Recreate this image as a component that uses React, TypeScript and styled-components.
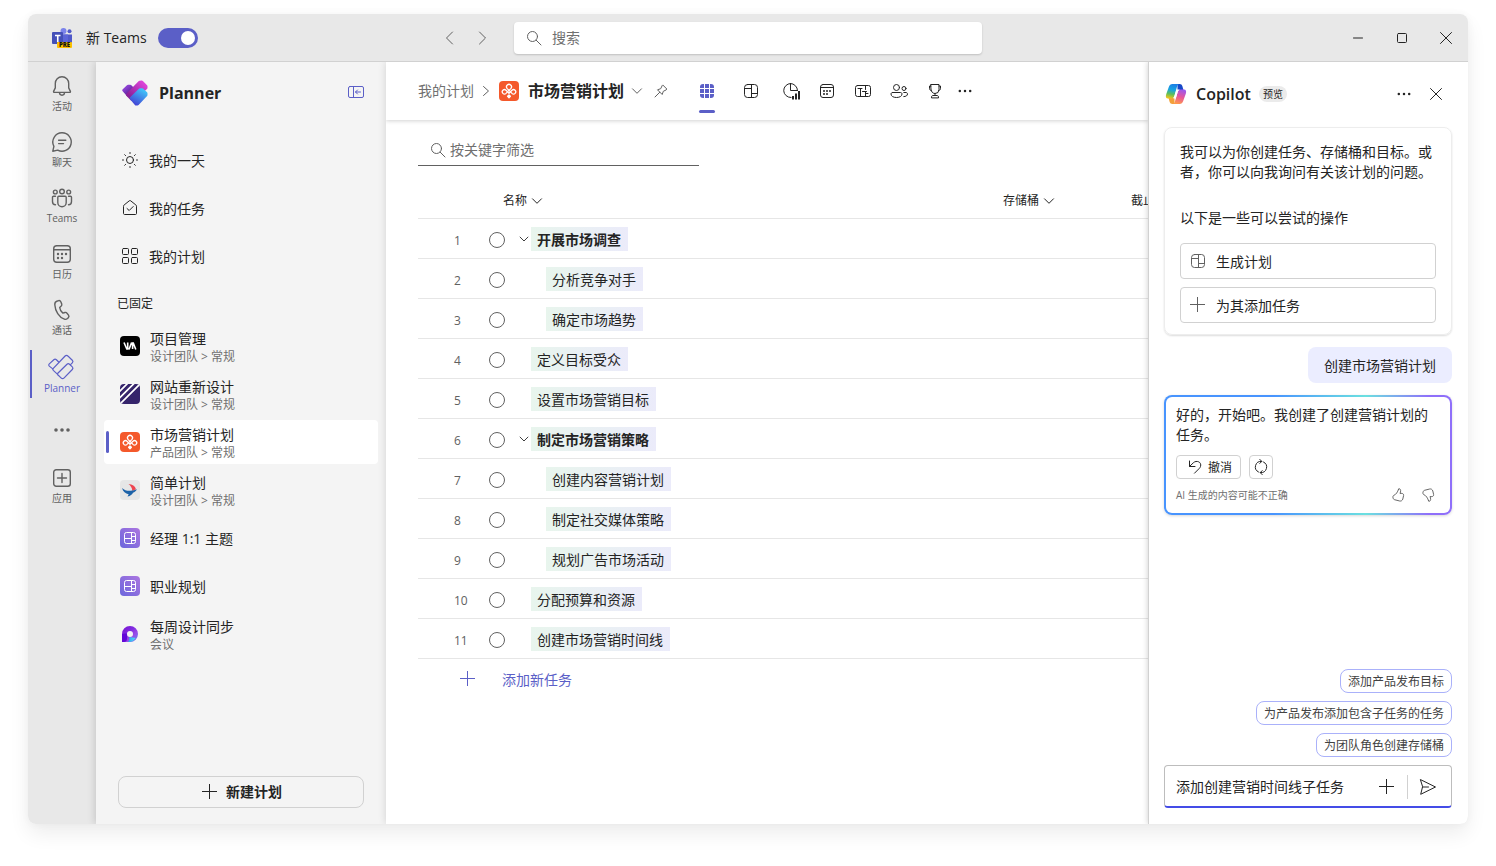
import React from 'react';
import styled, { createGlobalStyle, css } from 'styled-components';

const accent = '#5b5fc7';
const ink = '#242424';
const soft = '#616161';
const line = '#d1d1d1';
const hair = '#e6e6e6';

const GlobalStyle = createGlobalStyle`
  * { box-sizing: border-box; }
  body {
    margin: 0;
    background: #ffffff;
    color: ${ink};
    font-family: 'Open Sans', 'Noto Sans CJK SC', sans-serif;
    font-size: 14px;
    line-height: 20px;
  }
  button, input {
    font: inherit;
    color: inherit;
  }
  h1, h2, p, ul { margin: 0; padding: 0; }
  ul { list-style: none; }
`;

/* ---------- Shell ---------- */

const Page = styled.div`
  display: flex;
  min-height: 100vh;
  padding: 14px 28px 42px;
`;

const Window = styled.div`
  flex: 1;
  min-width: 0;
  display: flex;
  flex-direction: column;
  border-radius: 8px;
  box-shadow: 0 10px 20px rgba(0, 0, 0, 0.07), 0 0 8px rgba(0, 0, 0, 0.04);
  overflow: hidden;
`;

const TitleBar = styled.header`
  display: grid;
  grid-template-columns: 1fr 468px 1fr;
  align-items: center;
  height: 48px;
  background: #e8e8e8;
  border-bottom: 1px solid ${line};
`;

const Body = styled.div`
  flex: 1;
  display: grid;
  grid-template-columns: 68px 290px minmax(0, 1fr) 320px;
  overflow: hidden;
`;

const IconButton = styled.button<{ $color?: string }>`
  display: inline-flex;
  align-items: center;
  justify-content: center;
  flex: none;
  width: 24px;
  height: 24px;
  padding: 0;
  border: 0;
  background: none;
  color: ${(p) => p.$color ?? ink};
  cursor: pointer;
`;

const Label = styled.span`
  padding-top: 2px;
`;

/* ---------- Title bar ---------- */

const Brand = styled.div`
  display: flex;
  align-items: center;
  padding-left: 23px;
`;

const SwitchLabel = styled.label`
  display: flex;
  align-items: center;
  flex: 1;
  gap: 11px;
  margin-left: 13px;
`;

const Switch = styled.input`
  appearance: none;
  position: relative;
  width: 40px;
  height: 20px;
  margin: 0;
  border-radius: 10px;
  background: #bdbdbd;
  &:checked { background: ${accent}; }
  &::before {
    content: '';
    position: absolute;
    top: 3px;
    left: 3px;
    width: 14px;
    height: 14px;
    border-radius: 50%;
    background: #fff;
  }
  &:checked::before { left: 23px; }
`;

const HistoryNav = styled.nav`
  display: flex;
  gap: 9px;
  margin-right: 20px;
`;

const SearchBox = styled.label`
  display: flex;
  align-items: center;
  gap: 8px;
  height: 32px;
  padding: 0 10px;
  border-radius: 4px;
  background: #fff;
  color: ${soft};
  box-shadow: 0 1px 2px rgba(0, 0, 0, 0.18);
`;

const BareInput = styled.input`
  flex: 1;
  min-width: 0;
  padding: 0;
  border: 0;
  outline: 0;
  background: none;
  line-height: 20px;
  &::placeholder { color: #707070; opacity: 1; }
`;

const WindowControls = styled.div`
  display: flex;
  justify-content: flex-end;
  gap: 20px;
  padding-right: 10px;
`;

/* ---------- App rail ---------- */

const Rail = styled.nav`
  background: #e8e8e8;
`;

const RailList = styled.ul`
  display: flex;
  flex-direction: column;
`;

const RailLink = styled.a<{ $active?: boolean }>`
  position: relative;
  display: flex;
  flex-direction: column;
  align-items: center;
  height: 56px;
  padding-top: 12px;
  color: ${(p) => (p.$active ? accent : soft)};
  font-size: 10px;
  line-height: 16px;
  text-decoration: none;
  ${(p) =>
    p.$active &&
    css`
      &::before {
        content: '';
        position: absolute;
        left: 2px;
        top: 8px;
        width: 2px;
        height: 48px;
        background: ${accent};
      }
    `}
`;

/* ---------- Planner sidebar ---------- */

const Sidebar = styled.aside`
  position: relative;
  z-index: 1;
  display: flex;
  flex-direction: column;
  background: #f4f4f4;
  box-shadow: -1px 0 8px rgba(0, 0, 0, 0.16);
`;

const SideHead = styled.div`
  display: flex;
  align-items: center;
  height: 62px;
  padding: 0 18px 0 26px;
`;

const AppName = styled.h1`
  flex: 1;
  margin-left: 11px;
  font-size: 16px;
  font-weight: 700;
  line-height: 24px;
`;

const NavList = styled.ul`
  margin-top: 12px;
`;

const NavLink = styled.a`
  display: flex;
  align-items: center;
  gap: 9px;
  height: 48px;
  padding: 0 24px;
  color: ${ink};
  text-decoration: none;
`;

const GroupTitle = styled.h2`
  margin: 14px 21px 10px;
  font-size: 12px;
  font-weight: 400;
  line-height: 20px;
`;

const PinLink = styled.a<{ $active?: boolean }>`
  position: relative;
  display: flex;
  align-items: center;
  gap: 10px;
  height: 44px;
  margin: 0 8px 4px;
  padding: 0 16px;
  border-radius: 4px;
  background: ${(p) => (p.$active ? '#fff' : 'transparent')};
  color: ${ink};
  text-decoration: none;
  ${(p) =>
    p.$active &&
    css`
      &::before {
        content: '';
        position: absolute;
        left: 2px;
        top: 11px;
        width: 3px;
        height: 22px;
        border-radius: 2px;
        background: ${accent};
      }
    `}
`;

const PinText = styled.span`
  display: flex;
  flex-direction: column;
  padding-top: 2px;
`;

const PinPath = styled.span`
  color: #707070;
  font-size: 12px;
  line-height: 16px;
`;

const NewPlan = styled.button`
  display: flex;
  align-items: center;
  justify-content: center;
  gap: 6px;
  height: 32px;
  margin: auto 22px 16px;
  border: 1px solid ${line};
  border-radius: 8px;
  background: none;
  font-weight: 700;
`;

/* ---------- Plan grid ---------- */

const Main = styled.main`
  position: relative;
  z-index: 2;
  background: #fff;
  box-shadow: 0 0 8px rgba(0, 0, 0, 0.14);
  overflow: hidden;
`;

const MainClip = styled.div`
  overflow: hidden;
  padding-left: 32px;
`;

const PlanBar = styled.div`
  display: flex;
  align-items: center;
  height: 58px;
  padding-left: 32px;
  box-shadow: 0 1px 4px rgba(0, 0, 0, 0.18);
`;

const Crumb = styled.a`
  color: #707070;
  text-decoration: none;
`;

const CrumbSeparator = styled.span`
  display: flex;
  color: ${soft};
`;

const PlanName = styled.h2`
  margin: 0 1px 0 9px;
  font-size: 16px;
  font-weight: 700;
  line-height: 24px;
  white-space: nowrap;
`;

const CrumbLogo = styled.span`
  display: flex;
  margin-left: 1px;
`;

const Tabs = styled.div`
  display: flex;
  align-items: center;
  height: 58px;
  margin-left: 12px;
`;

const Tab = styled.button<{ $wide?: boolean; $active?: boolean; $narrow?: boolean }>`
  position: relative;
  display: flex;
  align-items: center;
  justify-content: center;
  width: ${(p) => (p.$wide ? 44 : p.$narrow ? 24 : 36)}px;
  height: 58px;
  padding: 0;
  border: 0;
  background: none;
  color: ${(p) => (p.$active ? accent : ink)};
  ${(p) =>
    p.$active &&
    css`
      &::after {
        content: '';
        position: absolute;
        left: 14px;
        bottom: 7px;
        width: 16px;
        height: 3px;
        border-radius: 2px;
        background: ${accent};
      }
    `}
`;

const Filter = styled.label`
  display: flex;
  align-items: center;
  gap: 2px;
  width: 281px;
  height: 32px;
  margin-top: 14px;
  padding-left: 10px;
  border-bottom: 1px solid ${soft};
  color: ${soft};
`;

const TaskTable = styled.table`
  width: calc(100% + 111px);
  margin-top: 16px;
  border-collapse: separate;
  border-spacing: 0;
  table-layout: fixed;
`;

const Th = styled.th<{ $lead?: boolean }>`
  height: 37px;
  padding: 2px 0 0 ${(p) => (p.$lead ? 14 : 0)}px;
  border-bottom: 1px solid ${hair};
  font-size: 12px;
  font-weight: 400;
  text-align: left;
  white-space: nowrap;
`;

const ThInner = styled.span`
  display: flex;
  align-items: center;
  gap: 2px;
`;

const Td = styled.td`
  height: 40px;
  padding: 1px 0 0;
  border-bottom: 1px solid ${hair};
`;

const RowNumber = styled(Td)`
  padding: 4px 0 0 36px;
  color: ${soft};
  font-size: 12px;
`;

const Done = styled.input`
  appearance: none;
  display: block;
  width: 16px;
  height: 16px;
  margin: 2px 0 0;
  border: 1px solid ${soft};
  border-radius: 50%;
  &:checked { background: ${accent}; }
`;

const TaskCell = styled.div<{ $child?: boolean }>`
  display: flex;
  align-items: center;
  padding-left: ${(p) => (p.$child ? 29 : 0)}px;
`;

const Toggle = styled.span`
  display: flex;
  width: 14px;
`;

const TaskName = styled.span<{ $strong?: boolean }>`
  height: 24px;
  padding: 0 7px 0 6px;
  background: linear-gradient(90deg, #e8f5ed, #ebebfa);
  font-weight: ${(p) => (p.$strong ? 700 : 400)};
  line-height: 26px;
  white-space: nowrap;
`;

const AddTask = styled.button`
  display: flex;
  align-items: center;
  gap: 24px;
  height: 40px;
  margin-left: 40px;
  padding: 0;
  border: 0;
  background: none;
  color: ${accent};
`;

/* ---------- Copilot panel ---------- */

const Panel = styled.aside`
  position: relative;
  z-index: 3;
  display: flex;
  flex-direction: column;
  padding: 0 16px 16px 15px;
  border-left: 1px solid ${line};
  background: #fff;
  box-shadow: 0 0 6px rgba(0, 0, 0, 0.2);
`;

const PanelHead = styled.div`
  display: flex;
  align-items: center;
  height: 65px;
  padding: 0 4px 1px 0;
`;

const PanelTitle = styled.h2`
  margin: 0 8px;
  font-size: 16px;
  font-weight: 600;
  line-height: 24px;
`;

const Badge = styled.span`
  padding: 0 4px;
  border-radius: 8px;
  background: #ebebeb;
  font-size: 10px;
  line-height: 16px;
`;

const HeadActions = styled.div`
  display: flex;
  gap: 8px;
  margin-left: auto;
`;

const Intro = styled.section`
  padding: 14px 15px 11px;
  border: 1px solid #ededed;
  border-radius: 8px;
  box-shadow: 0 1px 2px rgba(0, 0, 0, 0.14);
`;

const Hint = styled.p`
  margin: 26px 0 15px;
`;

const Suggestion = styled.button`
  display: flex;
  align-items: center;
  gap: 8px;
  width: 100%;
  height: 36px;
  padding: 0 7px;
  border: 1px solid ${line};
  border-radius: 4px;
  background: #fff;
  & > svg { color: ${soft}; }
  & + & { margin-top: 8px; }
`;

const UserBubble = styled.p`
  align-self: flex-end;
  margin: 12px 0;
  padding: 9px 16px 7px;
  border-radius: 8px;
  background: #ebedff;
`;

const Reply = styled.section`
  padding: 8px 10px 6px;
  border: 2px solid transparent;
  border-radius: 8px;
  background:
    linear-gradient(#fff, #fff) padding-box,
    linear-gradient(90deg, #4894fe 0%, #4894fe 38%, #6be0e0 70%, #8f6ffa 92%) border-box;
  box-shadow: 0 1px 3px rgba(0, 0, 0, 0.16);
`;

const ReplyActions = styled.div`
  display: flex;
  gap: 8px;
  margin: 10px 0 4px;
`;

const SmallButton = styled.button<{ $square?: boolean }>`
  display: flex;
  align-items: center;
  justify-content: center;
  gap: 3px;
  width: ${(p) => (p.$square ? 24 : 65)}px;
  height: 24px;
  padding: 0;
  border: 1px solid ${line};
  border-radius: 4px;
  background: #fff;
  font-size: 12px;
  line-height: 16px;
`;

const ReplyFoot = styled.div`
  display: flex;
  align-items: center;
  height: 24px;
  color: #707070;
  font-size: 10px;
  line-height: 16px;
`;

const Votes = styled.div`
  display: flex;
  gap: 6px;
  margin-left: auto;
`;

const Chips = styled.div`
  display: flex;
  flex-direction: column;
  align-items: flex-end;
  gap: 8px;
  margin: auto 0 8px;
`;

const Chip = styled.button`
  height: 24px;
  padding: 2px 7px 0;
  border: 1px solid #aab1fa;
  border-radius: 8px;
  background: #fff;
  color: #424242;
  font-size: 12px;
  line-height: 20px;
`;

const Composer = styled.form`
  display: flex;
  align-items: center;
  height: 43px;
  padding: 2px 11px 0;
  border: 1px solid #bdbdbd;
  border-bottom: 2px solid #444ce7;
  border-radius: 4px;
`;

const Divider = styled.span`
  width: 1px;
  height: 24px;
  margin: 0 8px;
  background: ${line};
`;

/* ---------- Drawings ---------- */

type GlyphProps = { size?: number; box?: number; sw?: number; children: React.ReactNode };

const Glyph = ({ size = 20, box = 20, sw = 1, children }: GlyphProps) => (
  <svg
    width={size}
    height={size}
    viewBox={`0 0 ${box} ${box}`}
    fill="none"
    stroke="currentColor"
    strokeWidth={sw}
    strokeLinecap="round"
    strokeLinejoin="round"
    aria-hidden="true"
  >
    {children}
  </svg>
);

const ChevronDown = () => <Glyph size={16} box={16}><path d="M3.500 5.800 8 10.300 12.500 5.800" /></Glyph>;
const ChevronLeft = () => <Glyph><path d="M13.500 4 7.500 10 13.500 16" /></Glyph>;
const ChevronRight = () => <Glyph><path d="M7.500 4 13.500 10 7.500 16" /></Glyph>;
const CrumbArrow = () => <Glyph size={24} box={24}><path d="M9.500 7.500 14.500 12 9.500 16.500" /></Glyph>;
const SearchIcon = () => <Glyph><circle cx="8.500" cy="8.500" r="5" /><path d="M12.200 12.200 17 17" /></Glyph>;
const PlusIcon = () => <Glyph><path d="M9.500 2v15M2 9.500h15" strokeLinecap="butt" /></Glyph>;
const CloseIcon = () => <Glyph><path d="M4.500 4.500l11 11M15.500 4.500l-11 11" /></Glyph>;
const Dots = () => (
  <Glyph>
    <g fill="currentColor" stroke="none">
      <circle cx="4.800" cy="10" r="1.250" /><circle cx="10" cy="10" r="1.250" /><circle cx="15.200" cy="10" r="1.250" />
    </g>
  </Glyph>
);
const BoardIcon = () => (
  <Glyph><rect x="3.500" y="3.500" width="13" height="13" rx="3" /><path d="M10.500 3.500v13M3.500 7.500h7M10.500 12.500h6" /></Glyph>
);
const GridIcon = () => (
  <Glyph>
    <rect x="3" y="3" width="14" height="14" rx="3" fill="currentColor" stroke="none" />
    <path d="M7.500 2.500v15M12.500 2.500v15M2.500 7.500h15M2.500 12.500h15" stroke="#fff" />
  </Glyph>
);
const ChartIcon = () => (
  <Glyph>
    <path d="M9.500 2.500a7 7 0 1 0 .5 14M9.500 2.500a7 7 0 0 1 7 7M9.500 2.500v7h7" />
    <path d="M12 15v3.500M15 12.500v6M18 10v8.500" strokeWidth="2" strokeLinecap="butt" />
  </Glyph>
);
const CalendarIcon = () => (
  <Glyph>
    <rect x="3.500" y="3.500" width="13" height="13" rx="2.500" />
    <path d="M3.500 6.500h13" />
    <g fill="currentColor" stroke="none">
      <circle cx="7" cy="10" r="1" /><circle cx="10" cy="10" r="1" /><circle cx="13" cy="10" r="1" />
      <circle cx="7" cy="13" r="1" /><circle cx="10" cy="13" r="1" />
    </g>
  </Glyph>
);
const TimelineIcon = () => (
  <Glyph>
    <rect x="2.500" y="4.500" width="15" height="11" rx="2" />
    <path d="M7.500 8v7.500M12.500 4.500v4M5 7.500h4M9.500 10.500h4M12.500 10.500v5M12.500 12.500h2.500" />
  </Glyph>
);
const PeopleIcon = () => (
  <Glyph>
    <circle cx="7.500" cy="6.500" r="3" /><circle cx="15" cy="7.500" r="2" />
    <path d="M3.500 11.500h8c.8 0 1.500.6 1.500 1.500 0 2.200-2.300 3.500-5.500 3.500S2 15.200 2 13c0-.9.700-1.500 1.500-1.500zM14.800 11.500h2.200c.8 0 1.500.6 1.500 1.400 0 1.700-1.500 2.700-3.700 2.700" />
  </Glyph>
);
const TrophyIcon = () => (
  <Glyph>
    <path d="M6 3.500h8v5a4 4 0 0 1-8 0zM6 5H4.500v2.500c0 1.200.8 2 1.800 2M14 5h1.500v2.500c0 1.200-.8 2-1.800 2M10 12.500v2M6.500 16.500v-.5c0-.8.600-1.500 1.500-1.500h4c.9 0 1.500.7 1.500 1.500v.5z" />
  </Glyph>
);
const PinIcon = () => (
  <Glyph size={16} box={16}>
    <path d="M10 2.200 13.800 6 13.200 6.900 10.300 8.300 9.200 11.500 4.500 6.800 7.700 5.700 9.100 2.800zM6.800 9.200 2 14" />
  </Glyph>
);
const SunIcon = () => (
  <Glyph>
    <circle cx="10" cy="10" r="3.500" />
    <path d="M10 2.500v1M10 16.500v1M2.500 10h1M16.500 10h1M4.700 4.700l.9.9M14.400 14.400l.9.9M15.300 4.700l-.9.9M5.600 14.400l-.9.9" />
  </Glyph>
);
const HomeCheckIcon = () => (
  <Glyph>
    <path d="M3.500 8.200c0-.5.200-.9.600-1.200l5.200-4.200a1.100 1.100 0 0 1 1.400 0L15.900 7c.4.300.6.700.6 1.200v7.300c0 .6-.4 1-1 1h-11c-.6 0-1-.4-1-1zM7 10.500l2.200 2 4-4" />
  </Glyph>
);
const TilesIcon = () => (
  <Glyph>
    <rect x="2.500" y="2.500" width="6" height="6" rx="1" /><rect x="11.500" y="2.500" width="6" height="6" rx="1" />
    <rect x="2.500" y="11.500" width="6" height="6" rx="1" /><rect x="11.500" y="11.500" width="6" height="6" rx="1" />
  </Glyph>
);
const CollapseIcon = () => (
  <Glyph>
    <rect x="2.500" y="3.500" width="15" height="11" rx="1.500" />
    <path d="M7.500 3.500v11M14.500 9h-5M11.500 7l-2 2 2 2" />
  </Glyph>
);
const UndoIcon = () => (
  <Glyph><path d="M4.500 4v5.500H10M4.500 9.500l3.800-3.700c3.200-3 8.700-.8 7.200 3.700-.3.900-.8 1.500-1.400 2.100L9.500 16.200" /></Glyph>
);
const SyncIcon = () => (
  <Glyph>
    <path d="M7.500 15A5.600 5.600 0 0 1 10.500 4.400M8.800 2.400l2 2-2 2M12.500 5A5.600 5.600 0 0 1 9.500 15.600M11.200 13.600l-2 2 2 2" />
  </Glyph>
);
const ThumbUpIcon = () => (
  <Glyph size={16} box={20} sw={1.2}>
    <path d="M10.800 2.600c.3-.8 2.400-.4 2.500 1.700.1 1.200-.3 2.600-.8 3.700h2.300c1.500 0 2.500 1.300 2.200 2.700l-1 4.300c-.4 1.800-2.100 2.900-3.900 2.500l-6.300-1.600c-.9-.2-1.600-.9-1.800-1.700l-.4-1.500c-.2-.9.200-1.700 1-2.100 3.400-1.600 4.600-3.900 6.200-8z" />
  </Glyph>
);
const ThumbDownIcon = () => (
  <Glyph size={16} box={20} sw={1.2}>
    <path d="M10.800 17.400c.3.800 2.400.4 2.500-1.700.1-1.200-.3-2.600-.8-3.700h2.300c1.500 0 2.500-1.300 2.200-2.700l-1-4.300c-.4-1.800-2.100-2.900-3.900-2.500L5.800 4.100c-.9.200-1.600.9-1.800 1.700l-.4 1.500c-.2.900.2 1.700 1 2.100 3.400 1.600 4.600 3.900 6.200 8z" />
  </Glyph>
);
const SendIcon = () => (
  <Glyph><path d="M2.700 2.700 17.500 10 2.700 17.300 4.500 10zM4.500 10h6" /></Glyph>
);

const BellIcon = () => (
  <Glyph size={24} box={24} sw={1.4}>
    <path d="M12 2.700c-3.900 0-6.700 3-6.700 6.700v4.500l-1.700 3.500c-.2.600.1 1 .7 1h15.400c.6 0 .9-.4.7-1l-1.700-3.500V9.400c0-3.700-2.800-6.700-6.700-6.700zM9.500 18.600c0 1.600 1.200 2.600 2.500 2.600s2.500-1 2.500-2.600" />
  </Glyph>
);
const ChatIcon = () => (
  <Glyph size={24} box={24} sw={1.4}>
    <path d="M12 2.800a9.200 9.200 0 1 1-4.300 17.300L2.800 21.200l1.100-4.900A9.200 9.200 0 0 1 12 2.800zM8.600 10.300h7.200M8.600 13.600h4.900" />
  </Glyph>
);
const TeamsPeopleIcon = () => (
  <Glyph size={24} box={24} sw={1.4}>
    <circle cx="12" cy="5.500" r="2.300" /><circle cx="5.300" cy="6" r="1.900" /><circle cx="18.700" cy="6" r="1.900" />
    <path d="M7.800 11.300c0-.6.400-1 1-1h6.400c.6 0 1 .4 1 1v5.200a4.200 4.200 0 0 1-8.400 0zM5.500 10.300H3.500c-.6 0-1 .4-1 1v4.200c0 1.900 1.200 3.200 3 3.200M18.500 10.300h2c.6 0 1 .4 1 1v4.200c0 1.900-1.200 3.200-3 3.200" />
  </Glyph>
);
const RailCalendarIcon = () => (
  <Glyph size={24} box={24} sw={1.4}>
    <rect x="3.700" y="3.700" width="16.600" height="16.600" rx="3" /><path d="M3.700 7.800h16.600" />
    <g fill="currentColor" stroke="none">
      <circle cx="8" cy="12" r="1.200" /><circle cx="12" cy="12" r="1.200" /><circle cx="16" cy="12" r="1.200" />
      <circle cx="8" cy="16" r="1.200" /><circle cx="12" cy="16" r="1.200" />
    </g>
  </Glyph>
);
const PhoneIcon = () => (
  <Glyph size={24} box={24} sw={1.4}>
    <path d="M7.300 3l1.100-.3c1-.3 2 .2 2.400 1.100l.9 2.100c.3.800.1 1.600-.5 2.200L9.700 9.500c.2 2.200 1.500 4.300 3.200 5.600l2-.6c.8-.2 1.600 0 2.100.7l1.500 1.900c.6.800.5 1.900-.2 2.600l-.8.800c-.9.800-2 1.100-3.100.7C9 19.400 5.200 13 4.800 6.700 4.700 5 5.600 3.500 7.300 3z" />
  </Glyph>
);
const AppsIcon = () => (
  <Glyph size={24} box={24} sw={1.4}>
    <rect x="3.700" y="3.700" width="16.600" height="16.600" rx="2.500" /><path d="M12 7.500v9M7.500 12h9" />
  </Glyph>
);
const RailDots = () => (
  <Glyph size={40} box={40}>
    <g fill="currentColor" stroke="none"><circle cx="14" cy="20" r="1.800" /><circle cx="20" cy="20" r="1.800" /><circle cx="26" cy="20" r="1.800" /></g>
  </Glyph>
);
const PlannerOutline = () => (
  <svg width="28" height="26" viewBox="0 0 28 26" fill="#e8e8e8" stroke="currentColor" strokeWidth="1.200" strokeLinejoin="round" aria-hidden="true">
    <path d="M1.300 9.900 5.800 5.800c.8-.7 1.800-.7 2.600 0l3.600 3.500-6.300 6.300-4.400-3.500c-.7-.7-.7-1.500 0-2.200z" />
    <path d="M5.300 14.400 17.100 2c.8-.8 2-.8 2.800 0l4.400 4.200c.8.800.8 1.800 0 2.600L12.500 20.600c-.8.800-1.800.8-2.600 0l-4.600-4.200c-.6-.6-.6-1.400 0-2z" />
    <path d="m9.800 19.200 9.200-9c.8-.7 1.700-.7 2.500 0l2.800 2.700c.8.800.8 1.800 0 2.600l-8.400 8.600c-.8.800-1.800.8-2.600 0l-3.500-3.400c-.4-.5-.4-1 0-1.500z" />
  </svg>
);

const PlannerLogo = () => (
  <svg width="26" height="26" viewBox="0 0 26 26" strokeWidth="3" strokeLinejoin="round" aria-hidden="true">
    <defs>
      <linearGradient id="plA" x1="0" y1="0" x2="1" y2="1"><stop offset="0.200" stopColor="#8a3fd0" /><stop offset="0.900" stopColor="#4b1a80" /></linearGradient>
      <linearGradient id="plB" x1="0" y1="1" x2="1" y2="0"><stop offset="0.150" stopColor="#8a2098" /><stop offset="1" stopColor="#e648e0" /></linearGradient>
      <linearGradient id="plC" x1="0.200" y1="1" x2="0.800" y2="0"><stop offset="0" stopColor="#4347d6" /><stop offset="1" stopColor="#3fc2f8" /></linearGradient>
    </defs>
    <path d="M1.800 10.300 6 6.300 8.300 6.300 12 10 6 15z" fill="url(#plA)" stroke="url(#plA)" />
    <path d="M5.400 14.700 17.600 2.200 19.800 2 24 6.200 24 8 11 19.500 10 19.500z" fill="url(#plB)" stroke="url(#plB)" />
    <path d="M9.200 18.300 18 9.800 20.300 9.800 24 13.300 24 15 15.500 23.900 14 23.900z" fill="url(#plC)" stroke="url(#plC)" />
  </svg>
);

const TeamsLogo = () => (
  <svg width="22" height="22" viewBox="0 0 22 22" aria-hidden="true">
    <circle cx="12.500" cy="4" r="3" fill="#7b83eb" /><circle cx="18.500" cy="4.300" r="2" fill="#5059c9" />
    <path d="M11 7.500h10v7a4 4 0 0 1-4 4h-6z" fill="#5059c9" />
    <path d="M9 7.500h8v11H9z" fill="#5c65d8" />
    <rect x="1" y="5" width="11" height="12" rx="1" fill="#4450b8" />
    <path d="M4 8.500h5.500M6.750 8.500v6.500" stroke="#fff" strokeWidth="1.600" />
    <rect x="6" y="15" width="15" height="6" rx="1" fill="#ffc000" />
    <text x="13.500" y="20.300" textAnchor="middle" fontFamily="Open Sans" fontWeight="800" fontSize="6" fill="#111">PRE</text>
  </svg>
);

const CopilotLogo = () => (
  <svg width="24" height="22" viewBox="0 0 24 22" aria-hidden="true">
    <defs>
      <linearGradient id="cpA" x1="0.500" y1="0" x2="0.300" y2="1">
        <stop offset="0" stopColor="#1b7fe6" /><stop offset="0.400" stopColor="#18a5e0" /><stop offset="0.700" stopColor="#5fbf5a" /><stop offset="1" stopColor="#f5c518" />
      </linearGradient>
      <linearGradient id="cpB" x1="0.700" y1="0" x2="0.400" y2="1">
        <stop offset="0" stopColor="#9a58f0" /><stop offset="0.500" stopColor="#e8569a" /><stop offset="1" stopColor="#ff9a4a" />
      </linearGradient>
    </defs>
    <path d="M13.500 1h2.200c1.400 0 2.200.8 2.600 2l1.200 4h-6z" fill="#1748c8" />
    <path d="M10.500 21H8.300c-1.400 0-2.200-.8-2.600-2l-1.200-4h6z" fill="#f2a03a" />
    <path d="M20 6.500h-3.500c-1.600 0-2.300.9-2.800 2.500l-2.200 7.500c-.7 2.400-1.300 4.500-3.200 4.500h7.200c2 0 3-.9 3.700-3l2.600-7.200c.9-2.700.1-4.300-1.800-4.300z" fill="url(#cpB)" />
    <path d="M4 15.500h3.500c1.600 0 2.300-.9 2.800-2.500l2.200-7.500C13.200 3.100 13.800 1 15.700 1H8.500c-2 0-3 .9-3.700 3l-2.600 7.200C1.300 13.900 2.100 15.500 4 15.500z" fill="url(#cpA)" />
    <path d="M13.900 6.500h2.600c-1.600 0-2.300.9-2.800 2.500l-1.900 6.500H9.200c.8-.5 1-1.500 1.300-2.500l1.500-5c.3-.9.900-1.500 1.900-1.500z" fill="#fff" />
  </svg>
);

const MarketingLogo = () => (
  <svg width="20" height="20" viewBox="0 0 20 20" fill="none" stroke="#fff" strokeWidth="1.300" strokeLinejoin="round" aria-hidden="true">
    <rect width="20" height="20" rx="4" fill="#f4592b" stroke="none" />
    <path d="M10 12.200 7 9.200A2.200 2.200 0 1 0 7 12.400L12 7.400A2.500 2.500 0 1 0 8 7.400L13 12.400A2.200 2.200 0 1 0 13 9.200z" />
    <path d="M10 13.900l1.400 1.400L10 16.700l-1.400-1.400z" fill="#fff" />
  </svg>
);
const ProjectLogo = () => (
  <svg width="20" height="20" viewBox="0 0 20 20" fill="none" stroke="#fff" strokeWidth="1.600" aria-hidden="true">
    <rect width="20" height="20" rx="4" fill="#000" stroke="none" />
    <path d="M4 6.500 6.800 13h.9V6.500M9 13.500 11.600 6.500M12.600 13V7h.7L15.800 13.500" />
  </svg>
);
const WebsiteLogo = () => (
  <svg width="20" height="20" viewBox="0 0 20 20" aria-hidden="true">
    <defs><clipPath id="webClip"><rect width="20" height="20" rx="4" /></clipPath></defs>
    <g clipPath="url(#webClip)">
      <rect width="20" height="20" fill="#35246b" />
      <path d="M-2 9 9-2M-2 15.500 15.500-2M-2 22 22-2" stroke="#fff" strokeWidth="1.700" />
    </g>
  </svg>
);
const SimpleLogo = () => (
  <svg width="20" height="20" viewBox="0 0 20 20" aria-hidden="true">
    <rect width="20" height="20" rx="4" fill="#e6e6e6" />
    <path d="M8.500 4c4 .2 6.500 2 7.500 5.300L12.300 11C12.300 8 10.500 5.500 8.500 4z" fill="#ee4550" />
    <path d="M2 8c2.500 2.300 5 3 8.500 2.800 2.500-.2 4.500-.8 6.500-1.500-1 2-2.500 3-4 3.500-.8 1.500-2.500 3.400-5.500 3.600l1.200-2.200C5.500 13.800 3 11.500 2 8z" fill="#1c62a8" />
  </svg>
);
const BoardLogo = ({ id }: { id: string }) => (
  <svg width="20" height="20" viewBox="0 0 20 20" fill="none" stroke="#fff" aria-hidden="true">
    <defs><linearGradient id={id} x1="0" y1="1" x2="1" y2="0"><stop offset="0" stopColor="#6b66dc" /><stop offset="1" stopColor="#ac76e0" /></linearGradient></defs>
    <rect width="20" height="20" rx="4" fill={`url(#${id})`} stroke="none" />
    <rect x="4.500" y="4.500" width="11" height="11" rx="2" />
    <path d="M11.500 4.500v11M4.500 10.500h7M11.500 8.500h4M11.500 12.500h4" />
  </svg>
);
const LoopLogo = () => (
  <svg width="20" height="20" viewBox="0 0 20 20" aria-hidden="true">
    <defs>
      <linearGradient id="loopA" x1="0" y1="0" x2="1" y2="1">
        <stop offset="0" stopColor="#7a10d0" /><stop offset="0.400" stopColor="#7f2be0" /><stop offset="0.650" stopColor="#9a4ae8" /><stop offset="1" stopColor="#5a8ff5" />
      </linearGradient>
      <linearGradient id="loopB" x1="0" y1="0" x2="1" y2="0"><stop offset="0" stopColor="#2a9cf0" /><stop offset="1" stopColor="#53dcf5" /></linearGradient>
    </defs>
    <path d="M10 2a8 8 0 0 1 0 16H2v-8a8 8 0 0 1 8-8zm0 5a3 3 0 1 0 0 6 3 3 0 0 0 0-6z" fill="url(#loopA)" fillRule="evenodd" />
    <path d="M7 18c2 0 2.500-2 2.300-5.100 2.500.6 5 .4 6.300 1.100A8 8 0 0 1 10 18z" fill="url(#loopB)" />
    <path d="M2 10c1 0 4.500-1 5 0v5c0 2-1.500 3-3 3H2z" fill="#6207d8" />
  </svg>
);

/* ---------- Data ---------- */

const railItems = [
  { label: '活动', icon: <BellIcon /> },
  { label: '聊天', icon: <ChatIcon /> },
  { label: 'Teams', icon: <TeamsPeopleIcon /> },
  { label: '日历', icon: <RailCalendarIcon /> },
  { label: '通话', icon: <PhoneIcon /> },
  { label: 'Planner', icon: <PlannerOutline />, active: true },
];

const navItems = [
  { label: '我的一天', icon: <SunIcon /> },
  { label: '我的任务', icon: <HomeCheckIcon /> },
  { label: '我的计划', icon: <TilesIcon /> },
];

const pins = [
  { title: '项目管理', path: '设计团队 > 常规', icon: <ProjectLogo /> },
  { title: '网站重新设计', path: '设计团队 > 常规', icon: <WebsiteLogo /> },
  { title: '市场营销计划', path: '产品团队 > 常规', icon: <MarketingLogo />, active: true },
  { title: '简单计划', path: '设计团队 > 常规', icon: <SimpleLogo /> },
  { title: '经理 1:1 主题', icon: <BoardLogo id="boardA" /> },
  { title: '职业规划', icon: <BoardLogo id="boardB" /> },
  { title: '每周设计同步', path: '会议', icon: <LoopLogo /> },
];

const views = [
  { label: '网格', icon: <GridIcon />, wide: true, active: true },
  { label: '板', icon: <BoardIcon />, wide: true },
  { label: '图表', icon: <ChartIcon /> },
  { label: '日程安排', icon: <CalendarIcon /> },
  { label: '时间线', icon: <TimelineIcon /> },
  { label: '人员', icon: <PeopleIcon /> },
  { label: '目标', icon: <TrophyIcon /> },
  { label: '更多', icon: <Dots />, narrow: true },
];

const tasks: { name: string; kind?: 'parent' | 'child' }[] = [
  { name: '开展市场调查', kind: 'parent' },
  { name: '分析竞争对手', kind: 'child' },
  { name: '确定市场趋势', kind: 'child' },
  { name: '定义目标受众' },
  { name: '设置市场营销目标' },
  { name: '制定市场营销策略', kind: 'parent' },
  { name: '创建内容营销计划', kind: 'child' },
  { name: '制定社交媒体策略', kind: 'child' },
  { name: '规划广告市场活动', kind: 'child' },
  { name: '分配预算和资源' },
  { name: '创建市场营销时间线' },
];

const chips = ['添加产品发布目标', '为产品发布添加包含子任务的任务', '为团队角色创建存储桶'];

/* ---------- App ---------- */

export default function App() {
  return (
    <Page>
      <GlobalStyle />
      <Window>
        <TitleBar>
          <Brand>
            <TeamsLogo />
            <SwitchLabel>
              <span>新 Teams</span>
              <Switch type="checkbox" role="switch" defaultChecked />
            </SwitchLabel>
            <HistoryNav>
              <IconButton aria-label="后退" $color={soft}><ChevronLeft /></IconButton>
              <IconButton aria-label="前进" $color={soft}><ChevronRight /></IconButton>
            </HistoryNav>
          </Brand>
          <SearchBox>
            <SearchIcon />
            <BareInput type="text" placeholder="搜索" aria-label="搜索" />
          </SearchBox>
          <WindowControls>
            <IconButton aria-label="最小化"><Glyph><path d="M5.500 10h9" /></Glyph></IconButton>
            <IconButton aria-label="最大化"><Glyph><rect x="5.500" y="5.500" width="9" height="9" rx="1" /></Glyph></IconButton>
            <IconButton aria-label="关闭"><CloseIcon /></IconButton>
          </WindowControls>
        </TitleBar>
        <Body>
          <Rail>
            <RailList>
              {railItems.map((item) => (
                <li key={item.label}>
                  <RailLink href="#" $active={item.active}>
                    {item.icon}
                    {item.label}
                  </RailLink>
                </li>
              ))}
              <li>
                <RailLink href="#" aria-label="更多应用"><RailDots /></RailLink>
              </li>
              <li>
                <RailLink href="#"><AppsIcon />应用</RailLink>
              </li>
            </RailList>
          </Rail>

          <Sidebar>
            <SideHead>
              <PlannerLogo />
              <AppName>Planner</AppName>
              <IconButton aria-label="折叠" $color={accent}><CollapseIcon /></IconButton>
            </SideHead>
            <NavList>
              {navItems.map((item) => (
                <li key={item.label}>
                  <NavLink href="#">{item.icon}<Label>{item.label}</Label></NavLink>
                </li>
              ))}
            </NavList>
            <GroupTitle>已固定</GroupTitle>
            <ul>
              {pins.map((pin) => (
                <li key={pin.title}>
                  <PinLink href="#" $active={pin.active}>
                    {pin.icon}
                    <PinText>
                      <span>{pin.title}</span>
                      {pin.path && <PinPath>{pin.path}</PinPath>}
                    </PinText>
                  </PinLink>
                </li>
              ))}
            </ul>
            <NewPlan><PlusIcon />新建计划</NewPlan>
          </Sidebar>

          <Main>
            <PlanBar>
              <Crumb href="#">我的计划</Crumb>
              <CrumbSeparator><CrumbArrow /></CrumbSeparator>
              <CrumbLogo><MarketingLogo /></CrumbLogo>
              <PlanName>市场营销计划</PlanName>
              <IconButton aria-label="计划选项" $color={soft}><ChevronDown /></IconButton>
              <IconButton aria-label="固定" $color={soft}><PinIcon /></IconButton>
              <Tabs>
                {views.map((v) => (
                  <Tab key={v.label} aria-label={v.label} $wide={v.wide} $active={v.active} $narrow={v.narrow}>
                    {v.icon}
                  </Tab>
                ))}
              </Tabs>
            </PlanBar>
            <MainClip>
              <Filter>
                <SearchIcon />
                <BareInput type="text" placeholder="按关键字筛选" aria-label="按关键字筛选" />
              </Filter>
              <TaskTable>
                <colgroup>
                  <col width="71" />
                  <col width="28" />
                  <col />
                  <col width="128" />
                  <col width="128" />
                </colgroup>
                <thead>
                  <tr>
                    <Th />
                    <Th colSpan={2} $lead><ThInner>名称<ChevronDown /></ThInner></Th>
                    <Th><ThInner>存储桶<ChevronDown /></ThInner></Th>
                    <Th>截止</Th>
                  </tr>
                </thead>
                <tbody>
                  {tasks.map((task, i) => (
                    <tr key={task.name}>
                      <RowNumber>{i + 1}</RowNumber>
                      <Td><Done type="checkbox" aria-label={task.name} /></Td>
                      <Td>
                        <TaskCell $child={task.kind === 'child'}>
                          {task.kind !== 'child' && <Toggle>{task.kind === 'parent' && <ChevronDown />}</Toggle>}
                          <TaskName $strong={task.kind === 'parent'}>{task.name}</TaskName>
                        </TaskCell>
                      </Td>
                      <Td />
                      <Td />
                    </tr>
                  ))}
                </tbody>
              </TaskTable>
              <AddTask><PlusIcon /><Label>添加新任务</Label></AddTask>
            </MainClip>
          </Main>

          <Panel>
            <PanelHead>
              <CopilotLogo />
              <PanelTitle>Copilot</PanelTitle>
              <Badge>预览</Badge>
              <HeadActions>
                <IconButton aria-label="更多"><Dots /></IconButton>
                <IconButton aria-label="关闭"><CloseIcon /></IconButton>
              </HeadActions>
            </PanelHead>
            <Intro>
              <p>我可以为你创建任务、存储桶和目标。或者，你可以向我询问有关该计划的问题。</p>
              <Hint>以下是一些可以尝试的操作</Hint>
              <Suggestion><BoardIcon /><Label>生成计划</Label></Suggestion>
              <Suggestion><PlusIcon /><Label>为其添加任务</Label></Suggestion>
            </Intro>
            <UserBubble>创建市场营销计划</UserBubble>
            <Reply>
              <p>好的，开始吧。我创建了创建营销计划的任务。</p>
              <ReplyActions>
                <SmallButton><UndoIcon /><Label>撤消</Label></SmallButton>
                <SmallButton $square aria-label="重新生成"><SyncIcon /></SmallButton>
              </ReplyActions>
              <ReplyFoot>
                AI 生成的内容可能不正确
                <Votes>
                  <IconButton aria-label="喜欢" $color={soft}><ThumbUpIcon /></IconButton>
                  <IconButton aria-label="不喜欢" $color={soft}><ThumbDownIcon /></IconButton>
                </Votes>
              </ReplyFoot>
            </Reply>
            <Chips>
              {chips.map((c) => (
                <Chip key={c}>{c}</Chip>
              ))}
            </Chips>
            <Composer onSubmit={(e) => e.preventDefault()}>
              <BareInput type="text" defaultValue="添加创建营销时间线子任务" aria-label="消息" />
              <IconButton type="button" aria-label="添加"><PlusIcon /></IconButton>
              <Divider />
              <IconButton type="submit" aria-label="发送"><SendIcon /></IconButton>
            </Composer>
          </Panel>
        </Body>
      </Window>
    </Page>
  );
}
